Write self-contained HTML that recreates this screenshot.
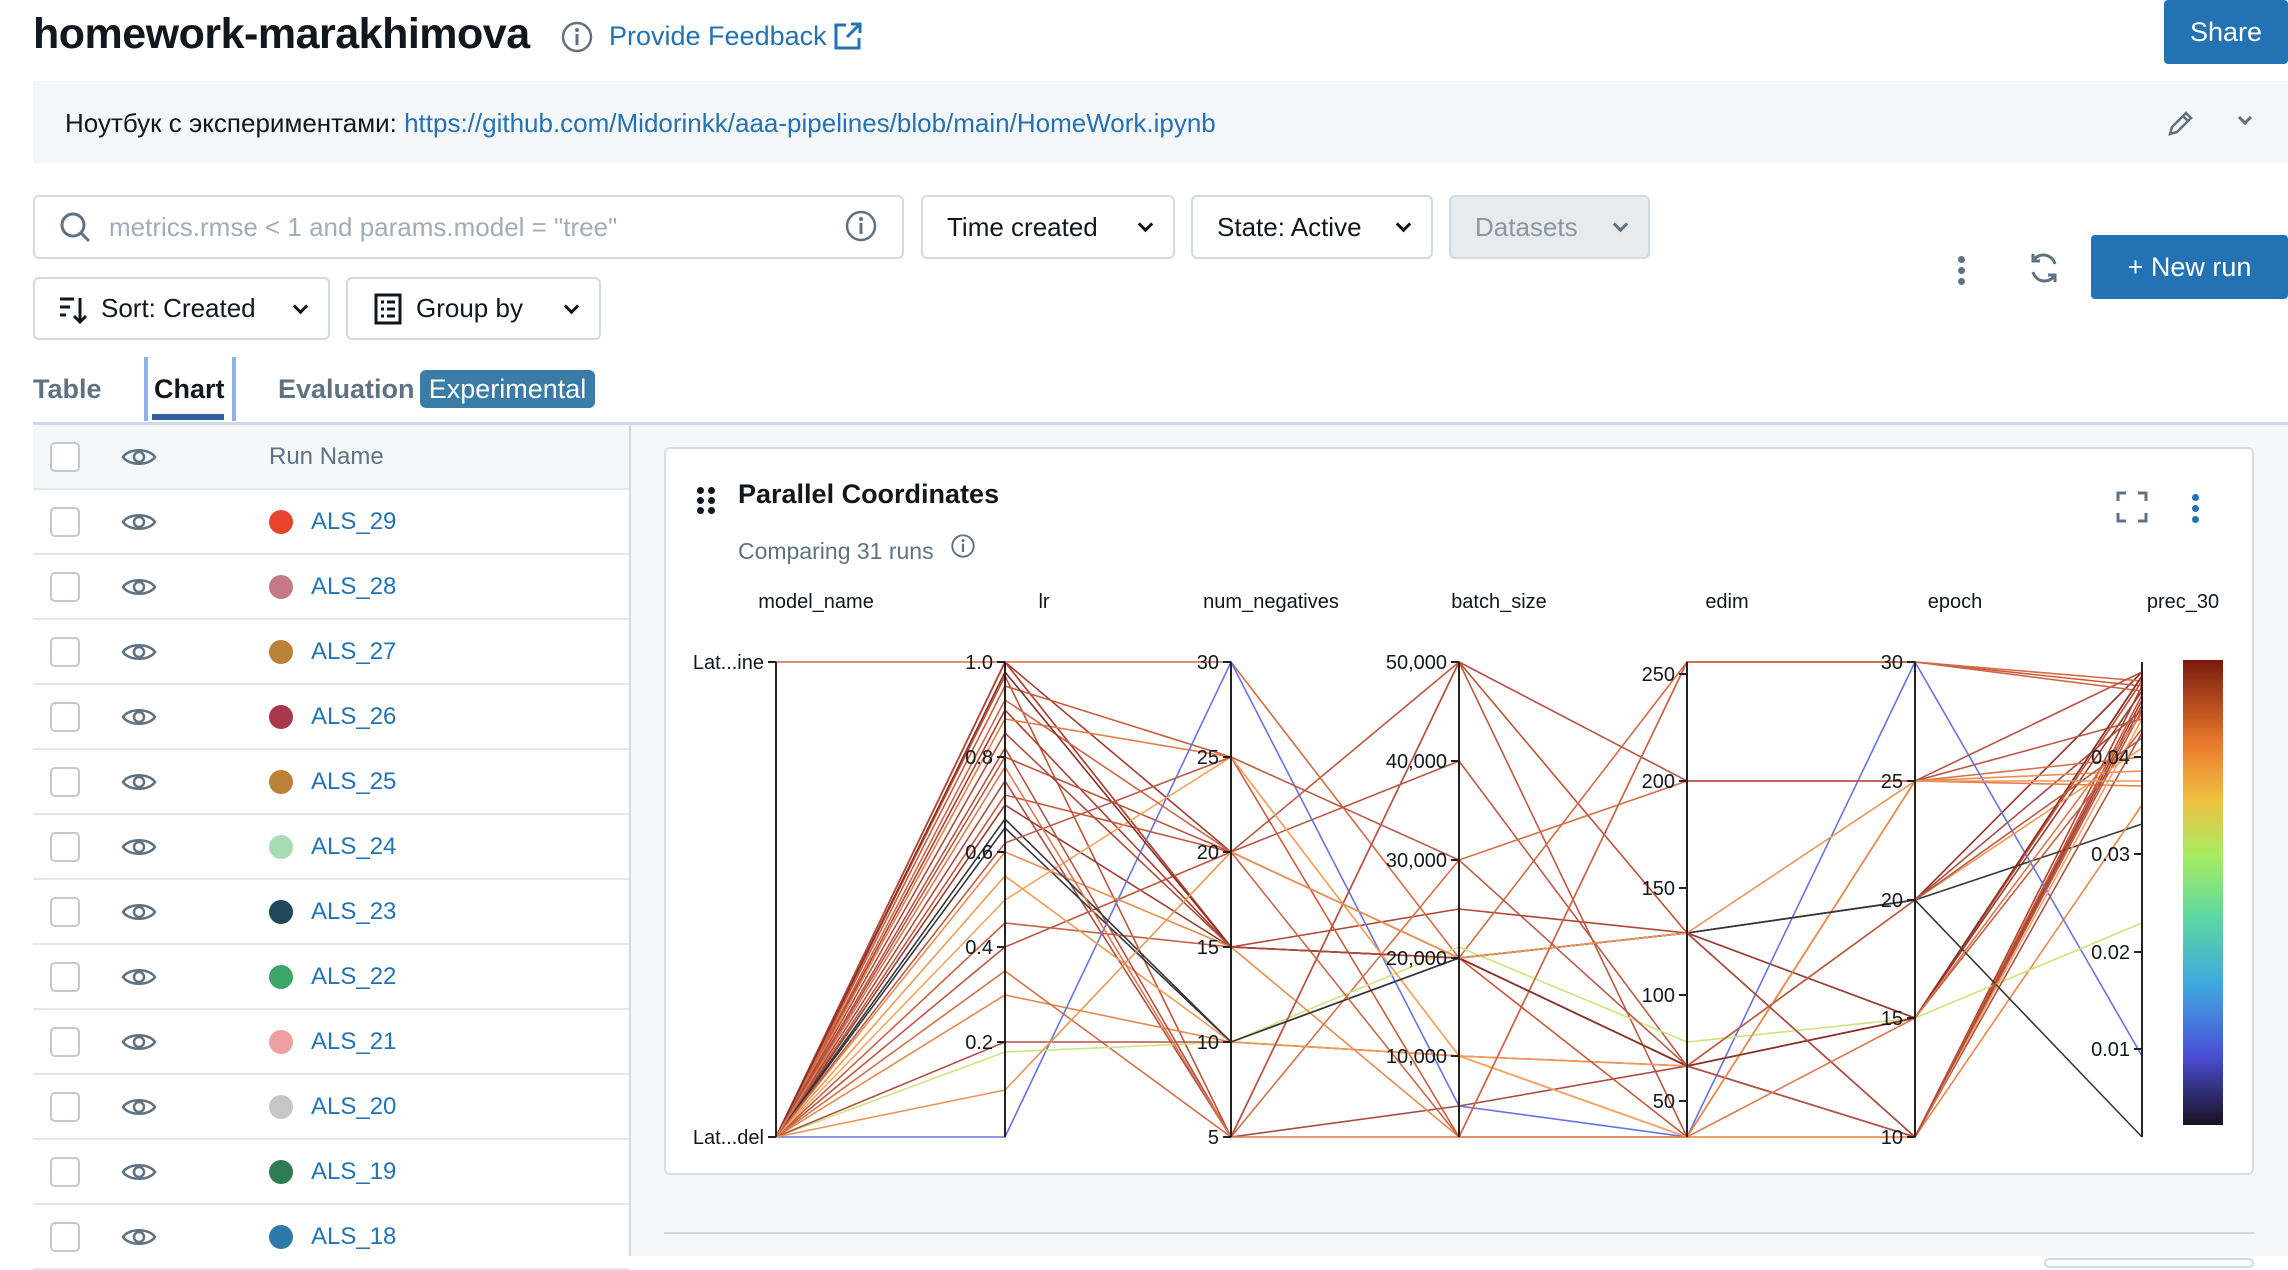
<!DOCTYPE html>
<html><head><meta charset="utf-8"><style>
*{box-sizing:border-box;margin:0;padding:0}
body{width:2288px;height:1256px;overflow:hidden;background:#fff;font-family:"Liberation Sans","Noto Sans CJK SC",sans-serif;color:#11171c;position:relative}
.abs{position:absolute}
.btn{position:absolute;border:2px solid #d1d9e1;border-radius:6px;background:#fff;font-size:26px;display:flex;align-items:center;padding-left:24px}
.chev{position:absolute;right:22px;top:22px;width:11px;height:11px;border-right:3px solid #11171c;border-bottom:3px solid #11171c;transform:rotate(45deg)}
.row{position:absolute;left:33px;width:596px;height:65px;border-bottom:2px solid #e3e7eb}
.cb{position:absolute;left:17px;top:17px;width:30px;height:30px;border:2px solid #c0c8d0;border-radius:5px;background:#fff}
.dot{position:absolute;left:236px;top:20px;width:24px;height:24px;border-radius:50%}
.nm{position:absolute;left:278px;top:18px;font-size:24px;color:#2272b4}
.eye{position:absolute;left:88px;top:20px}
svg text{font-family:"Liberation Sans",sans-serif;font-size:20px;fill:#11171c}
</style></head><body>
<div class="abs" style="left:33px;top:10px;font-size:43px;font-weight:bold;letter-spacing:-0.5px">homework-marakhimova</div>
<svg class="abs" style="left:560px;top:20px" width="34" height="34" viewBox="0 0 34 34"><circle cx="17" cy="17" r="14" fill="none" stroke="#5f7281" stroke-width="2.5"/><rect x="15.5" y="14" width="3" height="11" fill="#5f7281"/><circle cx="17" cy="10" r="2" fill="#5f7281"/></svg>
<div class="abs" style="left:609px;top:21px;font-size:27px;color:#2272b4">Provide Feedback</div>
<svg class="abs" style="left:832px;top:20px" width="32" height="32" viewBox="0 0 32 32" fill="none" stroke="#2272b4" stroke-width="3"><path d="M14 5H4v23h23V18M19 4h9v9M28 4L15 17"/></svg>
<div class="abs" style="left:2164px;top:0;width:124px;height:64px;background:#2272b4;color:#fff;border-radius:4px;font-size:27px;display:flex;align-items:center;justify-content:center">Share</div>
<div class="abs" style="left:33px;top:81px;width:2255px;height:82px;background:#f5f6f8"></div>
<div class="abs" style="left:65px;top:108px;font-size:26px">Ноутбук с экспериментами: <span style="color:#2272b4">https://github.com/Midorinkk/aaa-pipelines/blob/main/HomeWork.ipynb</span></div>
<svg class="abs" style="left:2166px;top:108px" width="30" height="30" viewBox="0 0 30 30" fill="none" stroke="#5f7281" stroke-width="2.5"><path d="M4 26l2-7L20 5l5 5-14 14zM17 8l5 5"/></svg>
<div class="chev" style="left:2240px;top:113px;right:auto;border-color:#5f7281;width:10px;height:10px"></div>
<div class="btn" style="left:33px;top:195px;width:871px;height:64px;padding-left:74px;color:#a0acb6">metrics.rmse &lt; 1 and params.model = "tree"</div>
<svg class="abs" style="left:58px;top:210px" width="36" height="36" viewBox="0 0 36 36" fill="none" stroke="#5f7281" stroke-width="3"><circle cx="15" cy="15" r="11"/><path d="M23 23l8 8"/></svg>
<svg class="abs" style="left:844px;top:209px" width="34" height="34" viewBox="0 0 34 34"><circle cx="17" cy="17" r="14" fill="none" stroke="#5f7281" stroke-width="2.5"/><rect x="15.5" y="14" width="3" height="11" fill="#5f7281"/><circle cx="17" cy="10" r="2" fill="#5f7281"/></svg>
<div class="btn" style="left:921px;top:195px;width:254px;height:64px">Time created<div class="chev"></div></div>
<div class="btn" style="left:1191px;top:195px;width:242px;height:64px">State: Active<div class="chev"></div></div>
<div class="btn" style="left:1449px;top:195px;width:201px;height:64px;background:#e8ebee;color:#8a97a2">Datasets<div class="chev" style="border-color:#5f7281"></div></div>
<div class="abs" style="left:1958px;top:256px;width:7px;height:7px;border-radius:50%;background:#5f7281;box-shadow:0 11px 0 #5f7281,0 22px 0 #5f7281"></div>
<svg class="abs" style="left:2026px;top:250px" width="36" height="36" viewBox="0 0 36 36" fill="none" stroke="#5f7281" stroke-width="3"><path d="M29 14a12 12 0 0 0-22-3M7 22a12 12 0 0 0 22 3M7 4v7h7M29 32v-7h-7"/></svg>
<div class="abs" style="left:2091px;top:235px;width:197px;height:64px;background:#2272b4;color:#fff;border-radius:4px;font-size:27px;display:flex;align-items:center;justify-content:center">+&nbsp;New run</div>
<div class="btn" style="left:33px;top:277px;width:297px;height:63px;padding-left:66px">Sort: Created<div class="chev"></div></div>
<svg class="abs" style="left:58px;top:295px" width="32" height="30" viewBox="0 0 32 30" fill="none" stroke="#11171c" stroke-width="3"><path d="M2 4h14M2 12h10M2 20h6M22 3v24M16 21l6 6 6-6"/></svg>
<div class="btn" style="left:346px;top:277px;width:255px;height:63px;padding-left:68px">Group by<div class="chev"></div></div>
<svg class="abs" style="left:373px;top:293px" width="30" height="32" viewBox="0 0 30 32" fill="none" stroke="#11171c" stroke-width="3"><rect x="3" y="2" width="24" height="28"/><path d="M8 9h3M8 16h3M8 23h3M14 9h8M14 16h8M14 23h8"/></svg>
<div class="abs" style="left:33px;top:374px;font-size:27px;color:#5f7281;font-weight:bold">Table</div>
<div class="abs" style="left:144px;top:357px;width:92px;height:64px;border-left:4px solid #8fb1f0;border-right:4px solid #8fb1f0"></div>
<div class="abs" style="left:154px;top:374px;font-size:27px;font-weight:bold">Chart</div>
<div class="abs" style="left:152px;top:414px;width:72px;height:6px;background:#2f5fa0"></div>
<div class="abs" style="left:278px;top:374px;font-size:27px;color:#5f7281;font-weight:bold">Evaluation</div>
<div class="abs" style="left:420px;top:370px;width:175px;height:38px;background:#3a7ca5;border-radius:6px;color:#fff;font-size:27px;text-align:center;line-height:38px">Experimental</div>
<div class="abs" style="left:33px;top:422px;width:2255px;height:3px;background:#d1d9e1"></div>
<div class="abs" style="left:629px;top:425px;width:1659px;height:831px;background:#f6f7f9"></div>
<div class="abs" style="left:629px;top:425px;width:2px;height:831px;background:#d1d9e1"></div>

<div class="row" style="top:425px;background:#f6f7f9"><div class="cb"></div><svg class="eye" width="36" height="24" viewBox="0 0 36 24" fill="none" stroke="#5f7281" stroke-width="2.5"><path d="M2 12C8 3 28 3 34 12C28 21 8 21 2 12Z"/><circle cx="18" cy="12" r="5"/></svg><div class="nm" style="color:#5f7281;left:236px">Run Name</div></div>
<div class="row" style="top:490px"><div class="cb"></div><svg class="eye" width="36" height="24" viewBox="0 0 36 24" fill="none" stroke="#5f7281" stroke-width="2.5"><path d="M2 12C8 3 28 3 34 12C28 21 8 21 2 12Z"/><circle cx="18" cy="12" r="5"/></svg><div class="dot" style="background:#e8432d"></div><div class="nm">ALS_29</div></div>
<div class="row" style="top:555px"><div class="cb"></div><svg class="eye" width="36" height="24" viewBox="0 0 36 24" fill="none" stroke="#5f7281" stroke-width="2.5"><path d="M2 12C8 3 28 3 34 12C28 21 8 21 2 12Z"/><circle cx="18" cy="12" r="5"/></svg><div class="dot" style="background:#c47a86"></div><div class="nm">ALS_28</div></div>
<div class="row" style="top:620px"><div class="cb"></div><svg class="eye" width="36" height="24" viewBox="0 0 36 24" fill="none" stroke="#5f7281" stroke-width="2.5"><path d="M2 12C8 3 28 3 34 12C28 21 8 21 2 12Z"/><circle cx="18" cy="12" r="5"/></svg><div class="dot" style="background:#b98238"></div><div class="nm">ALS_27</div></div>
<div class="row" style="top:685px"><div class="cb"></div><svg class="eye" width="36" height="24" viewBox="0 0 36 24" fill="none" stroke="#5f7281" stroke-width="2.5"><path d="M2 12C8 3 28 3 34 12C28 21 8 21 2 12Z"/><circle cx="18" cy="12" r="5"/></svg><div class="dot" style="background:#a8384e"></div><div class="nm">ALS_26</div></div>
<div class="row" style="top:750px"><div class="cb"></div><svg class="eye" width="36" height="24" viewBox="0 0 36 24" fill="none" stroke="#5f7281" stroke-width="2.5"><path d="M2 12C8 3 28 3 34 12C28 21 8 21 2 12Z"/><circle cx="18" cy="12" r="5"/></svg><div class="dot" style="background:#b98238"></div><div class="nm">ALS_25</div></div>
<div class="row" style="top:815px"><div class="cb"></div><svg class="eye" width="36" height="24" viewBox="0 0 36 24" fill="none" stroke="#5f7281" stroke-width="2.5"><path d="M2 12C8 3 28 3 34 12C28 21 8 21 2 12Z"/><circle cx="18" cy="12" r="5"/></svg><div class="dot" style="background:#a8dcb4"></div><div class="nm">ALS_24</div></div>
<div class="row" style="top:880px"><div class="cb"></div><svg class="eye" width="36" height="24" viewBox="0 0 36 24" fill="none" stroke="#5f7281" stroke-width="2.5"><path d="M2 12C8 3 28 3 34 12C28 21 8 21 2 12Z"/><circle cx="18" cy="12" r="5"/></svg><div class="dot" style="background:#1f4a5e"></div><div class="nm">ALS_23</div></div>
<div class="row" style="top:945px"><div class="cb"></div><svg class="eye" width="36" height="24" viewBox="0 0 36 24" fill="none" stroke="#5f7281" stroke-width="2.5"><path d="M2 12C8 3 28 3 34 12C28 21 8 21 2 12Z"/><circle cx="18" cy="12" r="5"/></svg><div class="dot" style="background:#3ca668"></div><div class="nm">ALS_22</div></div>
<div class="row" style="top:1010px"><div class="cb"></div><svg class="eye" width="36" height="24" viewBox="0 0 36 24" fill="none" stroke="#5f7281" stroke-width="2.5"><path d="M2 12C8 3 28 3 34 12C28 21 8 21 2 12Z"/><circle cx="18" cy="12" r="5"/></svg><div class="dot" style="background:#eca0a0"></div><div class="nm">ALS_21</div></div>
<div class="row" style="top:1075px"><div class="cb"></div><svg class="eye" width="36" height="24" viewBox="0 0 36 24" fill="none" stroke="#5f7281" stroke-width="2.5"><path d="M2 12C8 3 28 3 34 12C28 21 8 21 2 12Z"/><circle cx="18" cy="12" r="5"/></svg><div class="dot" style="background:#c6c6c6"></div><div class="nm">ALS_20</div></div>
<div class="row" style="top:1140px"><div class="cb"></div><svg class="eye" width="36" height="24" viewBox="0 0 36 24" fill="none" stroke="#5f7281" stroke-width="2.5"><path d="M2 12C8 3 28 3 34 12C28 21 8 21 2 12Z"/><circle cx="18" cy="12" r="5"/></svg><div class="dot" style="background:#2e7d52"></div><div class="nm">ALS_19</div></div>
<div class="row" style="top:1205px"><div class="cb"></div><svg class="eye" width="36" height="24" viewBox="0 0 36 24" fill="none" stroke="#5f7281" stroke-width="2.5"><path d="M2 12C8 3 28 3 34 12C28 21 8 21 2 12Z"/><circle cx="18" cy="12" r="5"/></svg><div class="dot" style="background:#2d7aa8"></div><div class="nm">ALS_18</div></div>

<div class="abs" style="left:664px;top:447px;width:1590px;height:728px;background:#fff;border:2px solid #d8dde2;border-radius:6px"></div>
<div class="abs" style="left:697px;top:487px;width:7px;height:7px;border-radius:50%;background:#11171c;box-shadow:11px 0 0 #11171c,0 10px 0 #11171c,11px 10px 0 #11171c,0 20px 0 #11171c,11px 20px 0 #11171c"></div>
<div class="abs" style="left:738px;top:479px;font-size:27px;font-weight:bold">Parallel Coordinates</div>
<div class="abs" style="left:738px;top:538px;font-size:23px;color:#5f7281">Comparing 31 runs</div>
<svg class="abs" style="left:950px;top:533px" width="26" height="26" viewBox="0 0 34 34"><circle cx="17" cy="17" r="14" fill="none" stroke="#5f7281" stroke-width="2.5"/><rect x="15.5" y="14" width="3" height="11" fill="#5f7281"/><circle cx="17" cy="10" r="2" fill="#5f7281"/></svg>
<svg class="abs" style="left:2116px;top:491px" width="32" height="32" viewBox="0 0 32 32" fill="none" stroke="#5f7281" stroke-width="3"><path d="M2 10V2h8M22 2h8v8M30 22v8h-8M10 30H2v-8"/></svg>
<div class="abs" style="left:2192px;top:494px;width:7px;height:7px;border-radius:50%;background:#2272b4;box-shadow:0 11px 0 #2272b4,0 22px 0 #2272b4"></div>
<div class="abs" style="left:664px;top:1232px;width:1590px;height:2px;background:#d1d9e1"></div>
<div class="abs" style="left:2044px;top:1258px;width:210px;height:10px;border:2px solid #d1d9e1;border-radius:6px;background:#fff"></div>

<svg class="abs" style="left:0;top:0" width="2288" height="1256">
<defs><linearGradient id="g" x1="0" y1="1" x2="0" y2="0"><stop offset="0" stop-color="#1a1020"/><stop offset=".15" stop-color="#4a4fd8"/><stop offset=".3" stop-color="#3fa8e0"/><stop offset=".45" stop-color="#5ed8a0"/><stop offset=".58" stop-color="#a8ec60"/><stop offset=".7" stop-color="#f0c040"/><stop offset=".82" stop-color="#ea7a2c"/><stop offset="1" stop-color="#7a1a0e"/></linearGradient></defs>
<g fill="none" stroke-width="1.6" opacity=".9">
<polyline stroke="#8b1a0e" points="776,1137 1005,662 1231,947 1459,958 1687,933 1915,900 2142,672"/>
<polyline stroke="#9b2515" points="776,1137 1005,662 1231,852 1459,958 1687,1066 1915,1018 2142,676"/>
<polyline stroke="#a83220" points="776,1137 1005,662 1231,947 1459,909 1687,933 1915,1137 2142,686"/>
<polyline stroke="#b8401f" points="776,1137 1005,676 1231,1137 1459,662 1687,933 1915,1018 2142,681"/>
<polyline stroke="#c44a28" points="776,1137 1005,686 1231,757 1459,1137 1687,662 1915,662 2142,686"/>
<polyline stroke="#a52a18" points="776,1137 1005,710 1231,947 1459,958 1687,1066 1915,1137 2142,700"/>
<polyline stroke="#b5452e" points="776,1137 1005,757 1231,852 1459,662 1687,1137 1915,781 2142,719"/>
<polyline stroke="#9e3a2e" points="776,1137 1005,781 1231,1137 1459,1106 1687,1066 1915,900 2142,710"/>
<polyline stroke="#d05a30" points="776,662 1005,662 1231,662 1459,958 1687,662 1915,662 2142,681"/>
<polyline stroke="#e07030" points="776,1137 1005,719 1231,757 1459,1056 1687,1137 1915,781 2142,786"/>
<polyline stroke="#8c2a1c" points="776,1137 1005,805 1231,947 1459,958 1687,933 1915,1018 2142,691"/>
<polyline stroke="#222" points="776,1137 1005,828 1231,1042 1459,958 1687,933 1915,900 2142,824"/>
<polyline stroke="#b84530" points="776,1137 1005,947 1231,852 1459,761 1687,1066 1915,1137 2142,710"/>
<polyline stroke="#c05030" points="776,1137 1005,923 1231,947 1459,958 1687,1066 1915,1018 2142,729"/>
<polyline stroke="#e87a35" points="776,1137 1005,995 1231,1042 1459,1056 1687,1137 1915,1137 2142,805"/>
<polyline stroke="#d06035" points="776,1137 1005,971 1231,1137 1459,860 1687,781 1915,781 2142,757"/>
<polyline stroke="#5565e0" points="776,1137 1005,1137 1231,662 1459,1106 1687,1137 1915,662 2142,1056"/>
<polyline stroke="#c8e070" points="776,1137 1005,1052 1231,1042 1459,947 1687,1042 1915,1018 2142,923"/>
<polyline stroke="#a84030" points="776,1137 1005,1042 1231,1042 1459,1056 1687,1066 1915,1137 2142,733"/>
<polyline stroke="#f09040" points="776,1137 1005,876 1231,1042 1459,1056 1687,1066 1915,900 2142,748"/>
<polyline stroke="#c04525" points="776,1137 1005,795 1231,852 1459,958 1687,1137 1915,1137 2142,695"/>
<polyline stroke="#e8803a" points="776,1137 1005,852 1231,947 1459,1137 1687,1137 1915,781 2142,771"/>
<polyline stroke="#f39a50" points="776,1137 1005,900 1231,757 1459,1056 1687,1137 1915,1137 2142,719"/>
<polyline stroke="#b04030" points="776,1137 1005,748 1231,1137 1459,662 1687,781 1915,781 2142,672"/>
<polyline stroke="#222" points="776,1137 1005,819 1231,1042 1459,958 1687,933 1915,900 2142,1137"/>
<polyline stroke="#c85535" points="776,1137 1005,700 1231,852 1459,1137 1687,662 1915,662 2142,691"/>
<polyline stroke="#7a1a10" points="776,1137 1005,672 1231,947 1459,958 1687,1066 1915,1018 2142,676"/>
<polyline stroke="#a33a28" points="776,1137 1005,733 1231,947 1459,958 1687,933 1915,1137 2142,705"/>
<polyline stroke="#b34a35" points="776,1137 1005,843 1231,757 1459,860 1687,1066 1915,900 2142,738"/>
<polyline stroke="#d96a3a" points="776,1137 1005,767 1231,1137 1459,1137 1687,1137 1915,1018 2142,714"/>
<polyline stroke="#e98a45" points="776,1137 1005,1090 1231,852 1459,958 1687,933 1915,781 2142,781"/>
</g>
<g stroke="#222" stroke-width="2">
<line x1="776" y1="662" x2="776" y2="1137"/><line x1="1005" y1="662" x2="1005" y2="1137"/><line x1="1231" y1="662" x2="1231" y2="1137"/><line x1="1459" y1="662" x2="1459" y2="1137"/><line x1="1687" y1="662" x2="1687" y2="1137"/><line x1="1915" y1="662" x2="1915" y2="1137"/><line x1="2142" y1="662" x2="2142" y2="1137"/>
<path d="M768 662h8M768 1137h8M997 662h8M997 757h8M997 852h8M997 947h8M997 1042h8M1223 662h8M1223 757h8M1223 852h8M1223 947h8M1223 1042h8M1223 1137h8M1451 662h8M1451 761h8M1451 860h8M1451 958h8M1451 1056h8M1679 674h8M1679 781h8M1679 888h8M1679 995h8M1679 1101h8M1907 662h8M1907 781h8M1907 900h8M1907 1018h8M1907 1137h8M2134 757h8M2134 854h8M2134 952h8M2134 1049h8"/>
</g>
<g text-anchor="middle">
<text x="816" y="608">model_name</text><text x="1044" y="608">lr</text><text x="1271" y="608">num_negatives</text><text x="1499" y="608">batch_size</text><text x="1727" y="608">edim</text><text x="1955" y="608">epoch</text><text x="2183" y="608">prec_30</text>
</g>
<g text-anchor="end">
<text x="764" y="669">Lat...ine</text><text x="764" y="1144">Lat...del</text>
<text x="993" y="669">1.0</text><text x="993" y="764">0.8</text><text x="993" y="859">0.6</text><text x="993" y="954">0.4</text><text x="993" y="1049">0.2</text>
<text x="1219" y="669">30</text><text x="1219" y="764">25</text><text x="1219" y="859">20</text><text x="1219" y="954">15</text><text x="1219" y="1049">10</text><text x="1219" y="1144">5</text>
<text x="1447" y="669">50,000</text><text x="1447" y="768">40,000</text><text x="1447" y="867">30,000</text><text x="1447" y="965">20,000</text><text x="1447" y="1063">10,000</text>
<text x="1675" y="681">250</text><text x="1675" y="788">200</text><text x="1675" y="895">150</text><text x="1675" y="1002">100</text><text x="1675" y="1108">50</text>
<text x="1903" y="669">30</text><text x="1903" y="788">25</text><text x="1903" y="907">20</text><text x="1903" y="1025">15</text><text x="1903" y="1144">10</text>
<text x="2130" y="764">0.04</text><text x="2130" y="861">0.03</text><text x="2130" y="959">0.02</text><text x="2130" y="1056">0.01</text>
</g>
<rect x="2183" y="660" width="40" height="465" fill="url(#g)"/>
</svg>
</body></html>
